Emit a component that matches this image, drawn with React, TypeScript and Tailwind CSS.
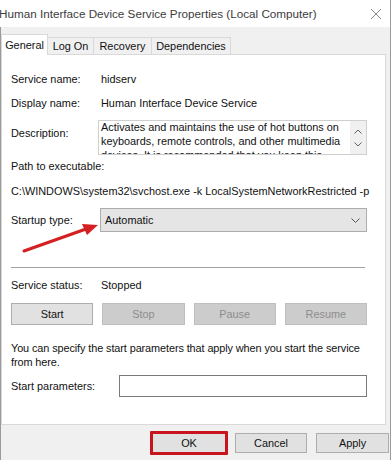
import React from 'react';

const font = "font-['Liberation_Sans',Arial,sans-serif]";

const Row: React.FC<{ label: string; children: React.ReactNode; className?: string }> = ({ label, children, className }) => (
  <div className={`flex items-center h-4 ${className ?? ''}`}>
    <span className="w-[90px] shrink-0">{label}</span>
    <span>{children}</span>
  </div>
);

const WinButton: React.FC<{ label: string; disabled?: boolean; className?: string }> = ({ label, disabled, className }) => (
  <div
    className={`flex items-center justify-center border ${
      disabled ? 'bg-[#cccccc] border-[#bfbfbf] text-[#8d8d8d]' : 'bg-[#e1e1e1] border-[#adadad] text-[#111]'
    } ${className ?? ''}`}
  >
    {label}
  </div>
);

const App: React.FC = () => {
  return (
    <div className={`relative w-[392px] h-[460px] overflow-hidden bg-white text-[10.9px] text-[#111] ${font}`}>
      <div className="w-[391px] h-full bg-[#f0f0f0] border-l border-r border-[#9a9a9a] flex flex-col">
        {/* Title bar */}
        <div className="h-[27px] bg-white flex items-center justify-between -ml-[2px] pr-[8px] shrink-0">
          <span className="text-[11.7px] text-[#3c3c3c] whitespace-nowrap">Human Interface Device Service Properties (Local Computer)</span>
          <svg width="12" height="12" viewBox="0 0 12 12" className="text-[#8a8a8a]">
            <path d="M1 1 L11 11 M11 1 L1 11" stroke="currentColor" strokeWidth="1" fill="none" />
          </svg>
        </div>

        {/* Tabs */}
        <div className="flex items-end h-[27px] shrink-0 relative z-10">
          <div className="w-[47px] h-[21px] -mb-[1px] bg-white border border-b-0 border-[#d9d9d9] flex items-center justify-center">
            General
          </div>
          <div className="w-[46px] h-[17px] border border-b-0 border-l-0 border-[#d9d9d9] flex items-center justify-center">
            Log On
          </div>
          <div className="w-[58px] h-[17px] border border-b-0 border-l-0 border-[#d9d9d9] flex items-center justify-center">
            Recovery
          </div>
          <div className="w-[79px] h-[17px] border border-b-0 border-l-0 border-[#d9d9d9] flex items-center justify-center">
            Dependencies
          </div>
        </div>

        {/* Panel */}
        <div className="h-[371px] mr-[4px] bg-white border border-[#d9d9d9] flex flex-col pl-[9px] pr-[18px] pt-[16px] shrink-0">
          <Row label="Service name:">hidserv</Row>
          <Row label="Display name:" className="mt-[8px]">Human Interface Device Service</Row>

          <div className="flex mt-[9px]">
            <span className="w-[87px] shrink-0 pt-[5px]">Description:</span>
            <div className="flex-1 h-[35px] border border-[#cfcfcf] flex overflow-hidden">
              <div className="flex-1 pl-[2px] leading-[14px] -mt-[1px]">
                Activates and maintains the use of hot buttons on keyboards, remote controls, and other multimedia devices. It is recommended that you keep this service running.
              </div>
              <div className="w-[16px] bg-[#f0f0f0] flex flex-col items-center justify-center gap-[8px]">
                <svg width="8" height="5" viewBox="0 0 8 5">
                  <path d="M0.5 4.5 L4 1 L7.5 4.5" stroke="#606060" strokeWidth="1" fill="none" />
                </svg>
                <svg width="8" height="5" viewBox="0 0 8 5">
                  <path d="M0.5 0.5 L4 4 L7.5 0.5" stroke="#606060" strokeWidth="1" fill="none" />
                </svg>
              </div>
            </div>
          </div>

          <div className="h-4 flex items-center mt-[3px]">Path to executable:</div>
          <div className="h-4 flex items-center mt-[9px] whitespace-nowrap">
            C:\WINDOWS\system32\svchost.exe -k LocalSystemNetworkRestricted -p
          </div>

          <div className="flex items-center mt-[9px]">
            <span className="w-[89px] shrink-0">Startup type:</span>
            <div className="flex-1 h-[24px] bg-[#e5e5e5] border border-[#adadad] flex items-center justify-between pl-[4px] pr-[6px]">
              <span>Automatic</span>
              <svg width="9" height="5" viewBox="0 0 9 5">
                <path d="M0.5 0.5 L4.5 4.5 L8.5 0.5" stroke="#555" strokeWidth="1" fill="none" />
              </svg>
            </div>
          </div>

          <div className="h-px bg-[#a0a0a0] mt-[35px] mr-[2px]" />

          <Row label="Service status:" className="mt-[9px]">Stopped</Row>

          <div className="flex gap-[9px] mt-[10px] h-[22px]">
            <WinButton label="Start" className="flex-1" />
            <WinButton label="Stop" disabled className="flex-1" />
            <WinButton label="Pause" disabled className="flex-1" />
            <WinButton label="Resume" disabled className="flex-1" />
          </div>

          <p className="mt-[16px] leading-[14px] -mr-[12px] tracking-[-0.1px]">
            You can specify the start parameters that apply when you start the service from here.
          </p>

          <div className="flex items-center mt-[6px]">
            <span className="w-[108px] shrink-0">Start parameters:</span>
            <div className="flex-1 h-[22px] border border-[#7a7a7a] bg-white" />
          </div>
        </div>

        {/* Footer buttons */}
        <div className="flex justify-end gap-[9px] pt-[8px] pr-[1px]">
          <div className="relative">
            <WinButton label="OK" className="w-[74px] h-[20px]" />
            <div className="absolute -inset-[2px] border-[3px] border-[#c8141c] rounded-[1px]" />
          </div>
          <WinButton label="Cancel" className="w-[72px] h-[20px]" />
          <WinButton label="Apply" className="w-[73px] h-[20px]" />
        </div>
      </div>

      {/* Red annotation arrow */}
      <svg className="absolute left-0 top-0 pointer-events-none" width="392" height="460">
        <line x1="24" y1="251" x2="86" y2="229" stroke="#d42020" strokeWidth="3" strokeLinecap="round" />
        <polygon points="98,225 82,224 87,235" fill="#d42020" />
      </svg>
    </div>
  );
};

export default App;
